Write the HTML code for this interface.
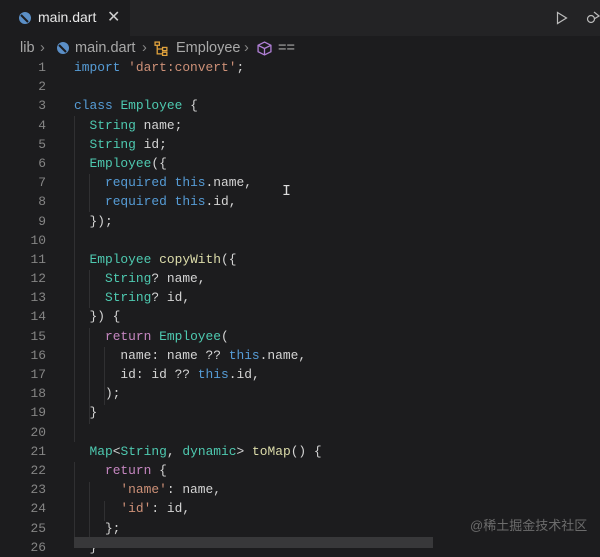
<!DOCTYPE html><html><head><meta charset="utf-8"><style>
body{margin:0;width:600px;height:548px;overflow:hidden;background:#1c1c1e;font-family:"Liberation Sans",sans-serif;position:relative}
.top{position:absolute;left:0;top:0;width:600px;height:36px;background:#232325}
.tab{position:absolute;left:0;top:0;width:130px;height:36px;background:#1c1c1e;color:#e8e8e8;font-size:14px}
.bc{position:absolute;top:38px;left:0;color:#a8a8a8;font-size:14.5px;height:20px;line-height:20px;white-space:nowrap;width:600px}
.bc>*{position:absolute;top:0}
.code{position:absolute;left:0;top:58px;font-family:"Liberation Mono",monospace;font-size:12.9px;}
.l{height:19.2px;line-height:19.2px;white-space:pre;position:relative}
.n{display:inline-block;width:46px;text-align:right;color:#858585}
.t{position:absolute;left:74px;top:0;color:#d4d4d4}
.k{color:#569cd6}.c{color:#4ec9b0}.s{color:#ce9178}.r{color:#c586c0}.f{color:#dcdcaa}
.g{position:absolute;width:1px;background:#303032}
</style></head><body>
<div class="top"></div>
<div class="tab">
<svg style="position:absolute;left:18px;top:11px" width="14" height="14" viewBox="0 0 14 14"><circle cx="7" cy="7" r="6" fill="#5b8fc7"/><path d="M3 4 L10 11" stroke="#1c1c1e" stroke-width="2"/></svg>
<span style="position:absolute;left:38px;top:9px">main.dart</span>
<span style="position:absolute;left:107px;top:7px;font-size:16px;color:#ccc">✕</span>
</div>
<svg style="position:absolute;left:556px;top:11px" width="12" height="14" viewBox="0 0 12 14"><path d="M1.5 1.5 L10.5 7 L1.5 12.5 Z" fill="none" stroke="#bbb" stroke-width="1.2"/></svg>
<svg style="position:absolute;left:586px;top:11px" width="14" height="14" viewBox="0 0 14 14"><circle cx="5" cy="8" r="3.5" fill="none" stroke="#bbb" stroke-width="1.2"/><path d="M8 1 L13 5 L8 8" fill="none" stroke="#bbb" stroke-width="1.2"/></svg>
<div class="bc"><span style="left:20px">lib</span><span style="left:40px;color:#888">›</span>
<svg style="left:56px;top:3px" width="14" height="14" viewBox="0 0 14 14"><circle cx="7" cy="7" r="6" fill="#5b8fc7"/><path d="M3 4 L10 11" stroke="#1c1c1e" stroke-width="2"/></svg><span style="left:75px">main.dart</span><span style="left:142px;color:#888">›</span>
<svg style="left:154px;top:3px" width="15" height="15" viewBox="0 0 14 14"><g fill="none" stroke="#e2a33d" stroke-width="1.2"><rect x="1" y="1" width="4" height="3"/><rect x="8" y="6" width="4" height="3"/><rect x="8" y="10.5" width="4" height="3"/><path d="M3 4v8h5M3 7.5h5"/></g></svg><span style="left:176px">Employee</span><span style="left:244px;color:#888">›</span>
<svg style="left:257px;top:3px" width="15" height="15" viewBox="0 0 14 14"><g fill="none" stroke="#b180d7" stroke-width="1.2"><path d="M7 1 L13 4 L13 10 L7 13 L1 10 L1 4 Z M1 4 L7 7 L13 4 M7 7 L7 13"/></g></svg><span style="left:278px">==</span></div>
<div class="g" style="left:74px;top:116px;height:326px"></div>
<div class="g" style="left:89px;top:174px;height:38px"></div>
<div class="g" style="left:89px;top:270px;height:38px"></div>
<div class="g" style="left:89px;top:328px;height:96px"></div>
<div class="g" style="left:104px;top:347px;height:58px"></div>
<div class="g" style="left:74px;top:462px;height:86px"></div>
<div class="g" style="left:89px;top:482px;height:66px"></div>
<div class="g" style="left:104px;top:501px;height:20px"></div>
<div class="code">
<div class="l"><span class="n">1</span><span class="t"><span class="k">import</span> <span class="s">'dart:convert'</span>;</span></div>
<div class="l"><span class="n">2</span></div>
<div class="l"><span class="n">3</span><span class="t"><span class="k">class</span> <span class="c">Employee</span> {</span></div>
<div class="l"><span class="n">4</span><span class="t">  <span class="c">String</span> name;</span></div>
<div class="l"><span class="n">5</span><span class="t">  <span class="c">String</span> id;</span></div>
<div class="l"><span class="n">6</span><span class="t">  <span class="c">Employee</span>({</span></div>
<div class="l"><span class="n">7</span><span class="t">    <span class="k">required</span> <span class="k">this</span>.name,</span></div>
<div class="l"><span class="n">8</span><span class="t">    <span class="k">required</span> <span class="k">this</span>.id,</span></div>
<div class="l"><span class="n">9</span><span class="t">  });</span></div>
<div class="l"><span class="n">10</span></div>
<div class="l"><span class="n">11</span><span class="t">  <span class="c">Employee</span> <span class="f">copyWith</span>({</span></div>
<div class="l"><span class="n">12</span><span class="t">    <span class="c">String</span>? name,</span></div>
<div class="l"><span class="n">13</span><span class="t">    <span class="c">String</span>? id,</span></div>
<div class="l"><span class="n">14</span><span class="t">  }) {</span></div>
<div class="l"><span class="n">15</span><span class="t">    <span class="r">return</span> <span class="c">Employee</span>(</span></div>
<div class="l"><span class="n">16</span><span class="t">      name: name ?? <span class="k">this</span>.name,</span></div>
<div class="l"><span class="n">17</span><span class="t">      id: id ?? <span class="k">this</span>.id,</span></div>
<div class="l"><span class="n">18</span><span class="t">    );</span></div>
<div class="l"><span class="n">19</span><span class="t">  }</span></div>
<div class="l"><span class="n">20</span></div>
<div class="l"><span class="n">21</span><span class="t">  <span class="c">Map</span>&lt;<span class="c">String</span>, <span class="c">dynamic</span>&gt; <span class="f">toMap</span>() {</span></div>
<div class="l"><span class="n">22</span><span class="t">    <span class="r">return</span> {</span></div>
<div class="l"><span class="n">23</span><span class="t">      <span class="s">'name'</span>: name,</span></div>
<div class="l"><span class="n">24</span><span class="t">      <span class="s">'id'</span>: id,</span></div>
<div class="l"><span class="n">25</span><span class="t">    };</span></div>
<div class="l"><span class="n">26</span><span class="t">  }</span></div>
</div>
<div style="position:absolute;left:282px;top:183px;color:#ddd;font-size:15px;font-family:'Liberation Mono',monospace">I</div>
<div style="position:absolute;left:74px;top:537px;width:359px;height:11px;background:#38383a"></div>
<div style="position:absolute;left:470px;top:515px;color:#6c6c6c;font-size:13px;font-family:'Liberation Sans','Noto Sans CJK SC',sans-serif">@稀土掘金技术社区</div>
</body></html>
